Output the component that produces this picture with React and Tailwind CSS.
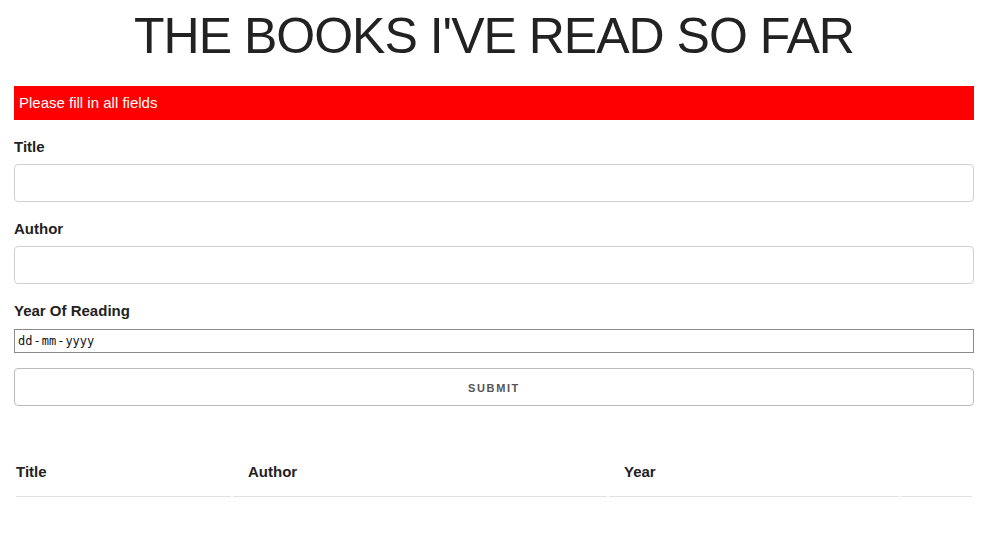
import { useState } from "react";

function App() {
  const [books] = useState([]);

  return (
    <div className="min-h-screen bg-white">
      <div className="w-[960px] ml-[14px] pt-[6px] font-['Liberation_Sans',Arial,sans-serif] text-[15px] leading-[1.6] text-[#222]">

        {/* Heading */}
        <h1 className="mb-[20px] text-center text-[50px] leading-[1.2] tracking-[-1px]">
          THE BOOKS I'VE READ SO FAR
        </h1>

        {/* Alert */}
        <div className="h-[34px] px-[5px] py-[5px] mb-[15px] bg-[#ff0000] text-white">
          Please fill in all fields
        </div>

        {/* Form */}
        <form onSubmit={(e) => e.preventDefault()}>
          <label className="block mb-[5px] font-semibold">Title</label>
          <input
            type="text"
            className="block w-full h-[38px] mb-[15px] px-[10px] border border-[#d1d1d1] rounded-[4px] outline-none"
          />

          <label className="block mb-[5px] font-semibold">Author</label>
          <input
            type="text"
            className="block w-full h-[38px] mb-[15px] px-[10px] border border-[#d1d1d1] rounded-[4px] outline-none"
          />

          <label className="block mb-[6px] font-semibold">Year Of Reading</label>
          <div className="flex items-center w-full h-[24px] mb-[15px] pl-[3px] border border-[#8a8a8a] font-['DejaVu_Sans_Mono',monospace] text-[12px] leading-none text-[#111]">
            <span>dd</span>
            <span className="mx-[1px]">-</span>
            <span>mm</span>
            <span className="mx-[1px]">-</span>
            <span>yyyy</span>
          </div>

          <button
            type="submit"
            className="block w-full h-[38px] pt-[3px] border border-[#bbbbbb] rounded-[4px] bg-transparent text-[11px] font-semibold tracking-[0.1rem] uppercase text-[#555]"
          >
            Submit
          </button>
        </form>

        {/* Books Table */}
        <table className="w-full mt-[40px] table-fixed border-separate border-spacing-[2px] text-left">
          <thead>
            <tr>
              <th className="w-[215px] py-[12px] pl-0 pr-[15px] border-b border-[#e1e1e1] font-bold">Title</th>
              <th className="w-[374px] py-[12px] px-[15px] border-b border-[#e1e1e1] font-bold">Author</th>
              <th className="w-[290px] py-[12px] px-[15px] border-b border-[#e1e1e1] font-bold">Year</th>
              <th className="w-[71px] py-[12px] px-[15px] border-b border-[#e1e1e1]"></th>
            </tr>
          </thead>
          <tbody>
            {books.map((book) => (
              <tr key={book.id}>
                <td className="py-[12px] pl-0 pr-[15px] border-b border-[#e1e1e1]">{book.title}</td>
                <td className="py-[12px] px-[15px] border-b border-[#e1e1e1]">{book.author}</td>
                <td className="py-[12px] px-[15px] border-b border-[#e1e1e1]">{book.year}</td>
                <td className="py-[12px] px-[15px] border-b border-[#e1e1e1]"></td>
              </tr>
            ))}
          </tbody>
        </table>

      </div>
    </div>
  );
}

export default App;
